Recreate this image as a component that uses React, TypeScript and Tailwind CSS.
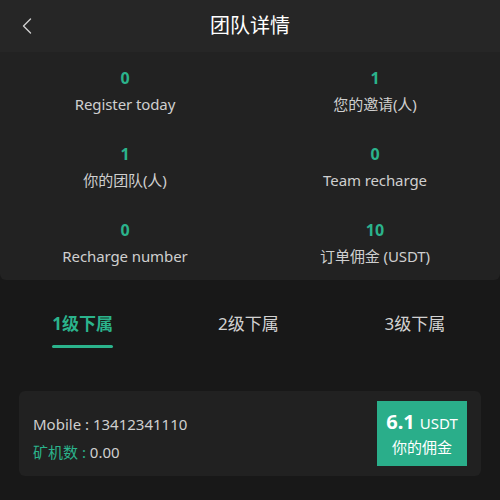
import { ChevronLeft } from "lucide-react";

const stats = [
  { value: "0", label: "Register today" },
  { value: "1", label: "您的邀请(人)" },
  { value: "1", label: "你的团队(人)" },
  { value: "0", label: "Team recharge" },
  { value: "0", label: "Recharge number" },
  { value: "10", label: "订单佣金 (USDT)" },
];

const tabs = ["1级下属", "2级下属", "3级下属"];

function App() {
  return (
    <div
      className="w-[500px] h-[500px] overflow-hidden bg-[#181818] text-[#d2d2d2]"
      style={{ fontFamily: '"Noto Sans", "Noto Sans CJK SC", sans-serif' }}
    >
      <div className="h-[52px] bg-[#262626] flex items-center relative">
        <ChevronLeft
          size={28}
          strokeWidth={1.2}
          className="absolute left-[13px] text-[#cfcfcf]"
        />
        <div className="w-full text-center text-[20px] text-white">团队详情</div>
      </div>

      <div className="bg-[#222222] grid grid-cols-2 rounded-b-md">
        {stats.map((s, i) => (
          <div key={i} className="h-[76px] flex flex-col items-center justify-center pt-[2px]">
            <div className="text-[16px] leading-[22px] font-bold text-[#2bb38c]">{s.value}</div>
            <div className="text-[15px] leading-[22px] mt-[4px] tracking-[-0.1px] text-[#cfcfcf]">{s.label}</div>
          </div>
        ))}
      </div>

      <div className="grid grid-cols-3 pt-[32px] pl-[1px]">
        {tabs.map((t, i) => (
          <div key={t} className={i === 0 ? "flex justify-center -ml-[3px]" : "flex justify-center -ml-[4px]"}>
            <div className="flex flex-col items-center">
              <div
                className={
                  i === 0
                    ? "text-[17px] leading-[24px] font-bold text-[#2bb38c]"
                    : "text-[17px] leading-[24px] text-[#d2d2d2]"
                }
              >
                {t}
              </div>
              <div
                className={
                  i === 0
                    ? "mt-[9px] h-[3px] w-[61px] bg-[#2bb38c] rounded-full"
                    : "mt-[9px] h-[3px] w-[61px]"
                }
              />
            </div>
          </div>
        ))}
      </div>

      <div className="mx-[19px] mt-[43px] h-[85px] rounded-md bg-[#212121] flex items-center justify-between pl-[14px] pr-[14px]">
        <div className="flex flex-col gap-[6px] pt-[8px] text-[15px] leading-[22px]">
          <div className="text-[#cfcfcf]">Mobile : 13412341110</div>
          <div>
            <span className="text-[#2bb38c]">矿机数 :</span>
            <span className="text-[#cfcfcf]"> 0.00</span>
          </div>
        </div>
        <div className="w-[90px] h-[65px] bg-[#2aae8a] flex flex-col items-center justify-center text-white">
          <div className="leading-[26px]">
            <span className="text-[20px] font-bold">6.1</span>
            <span className="text-[15px] ml-[5px]">USDT</span>
          </div>
          <div className="text-[15px] leading-[22px]">你的佣金</div>
        </div>
      </div>
    </div>
  );
}

export default App;
